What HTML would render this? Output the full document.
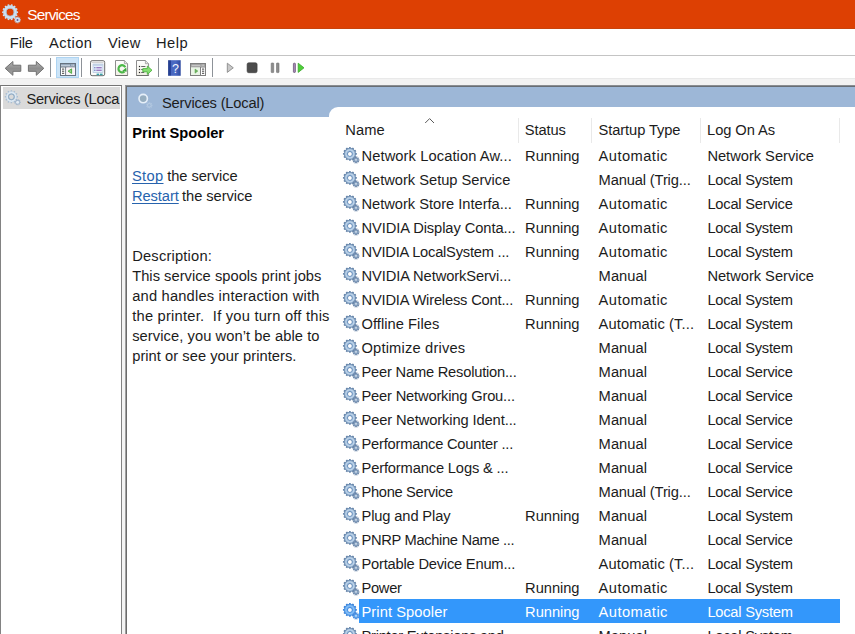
<!DOCTYPE html>
<html><head><meta charset="utf-8"><title>Services</title>
<style>
html,body{margin:0;padding:0;}
body{width:855px;height:634px;overflow:hidden;background:#fff;position:relative;font-family:"Liberation Sans",sans-serif;font-size:14.7px;color:#111;}
div,span,svg{position:absolute;}
.t{line-height:20px;height:20px;white-space:nowrap;color:#1c1c1c;}
.t.w{color:#fff;}
.t.b{font-weight:bold;color:#000;}
.t.lk{color:#2763ad;text-decoration:underline;text-decoration-skip-ink:none;text-underline-offset:1.5px;}
#title{left:0;top:0;width:855px;height:28px;background:#dd4003;border-bottom:1px solid #c8440c;}
#menuline{left:0;top:55px;width:855px;height:1px;background:#c4c4c4;}
#gap{left:0;top:78px;width:855px;height:7px;background:#f2f2f2;border-top:1px solid #e9e9e9;box-sizing:border-box;}
#tree{left:0;top:85px;width:120px;height:560px;border:1px solid #828282;border-top-color:#747474;background:#fff;box-sizing:content-box;}
#treesel{left:2.5px;top:87px;width:117px;height:21.6px;background:#dadada;}
#split{left:122px;top:85px;width:3px;height:560px;background:#f3f3f3;}
#rp{left:125px;top:85px;width:740px;height:560px;border:1px solid #a0a0a0;border-top-color:#8a8d91;background:#fff;}
#rp2{left:126px;top:86px;width:740px;height:560px;border:1px solid #6b6b6b;border-top-color:#676d74;background:#fff;}
#hdr{left:127px;top:87px;width:728px;height:30px;background:#9db7d7;}
#list{left:329px;top:107px;width:540px;height:540px;background:#fff;border-top-left-radius:9px;}
#sel{left:359px;top:599px;width:481px;height:24px;background:#3397fb;}
.cs{top:118px;width:1px;height:25px;background:#e9e9e9;}
.ts{top:58px;width:1px;height:19px;background:#8d9298;}
#tbsel{left:56.2px;top:57px;width:22.5px;height:20.5px;background:#cce4f7;border:1px solid #aed4f2;box-sizing:border-box;}
</style></head><body>
<svg width="0" height="0" style="left:0;top:0;overflow:hidden"><defs>
<radialGradient id="gg" cx="7.9" cy="6.9" r="5.9" gradientUnits="userSpaceOnUse">
<stop offset="0.33" stop-color="#4d75a5"/><stop offset="0.5" stop-color="#96b6d8"/><stop offset="0.68" stop-color="#c6daee"/><stop offset="0.86" stop-color="#8dabca"/><stop offset="1" stop-color="#587ba5"/></radialGradient>
<radialGradient id="ggs" cx="7.9" cy="6.9" r="5.9" gradientUnits="userSpaceOnUse">
<stop offset="0.33" stop-color="#2f78d2"/><stop offset="0.5" stop-color="#62a8f0"/><stop offset="0.68" stop-color="#8cc2f8"/><stop offset="0.86" stop-color="#5aa0ea"/><stop offset="1" stop-color="#3380d8"/></radialGradient>
<g id="gear">
<path d="M13.52 5.94 L14.85 6.08 L14.85 7.72 L13.52 7.86 L13.24 8.88 L14.33 9.67 L13.51 11.09 L12.29 10.54 L11.54 11.29 L12.09 12.51 L10.67 13.33 L9.88 12.24 L8.86 12.52 L8.72 13.85 L7.08 13.85 L6.94 12.52 L5.92 12.24 L5.13 13.33 L3.71 12.51 L4.26 11.29 L3.51 10.54 L2.29 11.09 L1.47 9.67 L2.56 8.88 L2.28 7.86 L0.95 7.72 L0.95 6.08 L2.28 5.94 L2.56 4.92 L1.47 4.13 L2.29 2.71 L3.51 3.26 L4.26 2.51 L3.71 1.29 L5.13 0.47 L5.92 1.56 L6.94 1.28 L7.08 -0.05 L8.72 -0.05 L8.86 1.28 L9.88 1.56 L10.67 0.47 L12.09 1.29 L11.54 2.51 L12.29 3.26 L13.51 2.71 L14.33 4.13 L13.24 4.92Z" fill="#6c89ac"/>
<circle cx="7.9" cy="6.9" r="5.9" fill="url(#gg)"/>
<circle cx="7.9" cy="6.9" r="2.0" fill="#fff"/>
<path d="M16.45 12.41 L17.57 12.40 L17.57 13.40 L16.45 13.39 L16.27 13.94 L17.18 14.59 L16.59 15.40 L15.69 14.74 L15.23 15.08 L15.57 16.14 L14.63 16.44 L14.29 15.38 L13.71 15.38 L13.37 16.44 L12.43 16.14 L12.77 15.08 L12.31 14.74 L11.41 15.40 L10.82 14.59 L11.73 13.94 L11.55 13.39 L10.43 13.40 L10.43 12.40 L11.55 12.41 L11.73 11.86 L10.82 11.21 L11.41 10.40 L12.31 11.06 L12.77 10.72 L12.43 9.66 L13.37 9.36 L13.71 10.42 L14.29 10.42 L14.63 9.36 L15.57 9.66 L15.23 10.72 L15.69 11.06 L16.59 10.40 L17.18 11.21 L16.27 11.86Z" fill="#5f7ca1"/>
<circle cx="14" cy="12.9" r="2.2" fill="#86a1c0"/>
<circle cx="14" cy="12.9" r="0.8" fill="#e6edf5"/>
</g>
<g id="gearsel">
<path d="M13.52 5.94 L14.85 6.08 L14.85 7.72 L13.52 7.86 L13.24 8.88 L14.33 9.67 L13.51 11.09 L12.29 10.54 L11.54 11.29 L12.09 12.51 L10.67 13.33 L9.88 12.24 L8.86 12.52 L8.72 13.85 L7.08 13.85 L6.94 12.52 L5.92 12.24 L5.13 13.33 L3.71 12.51 L4.26 11.29 L3.51 10.54 L2.29 11.09 L1.47 9.67 L2.56 8.88 L2.28 7.86 L0.95 7.72 L0.95 6.08 L2.28 5.94 L2.56 4.92 L1.47 4.13 L2.29 2.71 L3.51 3.26 L4.26 2.51 L3.71 1.29 L5.13 0.47 L5.92 1.56 L6.94 1.28 L7.08 -0.05 L8.72 -0.05 L8.86 1.28 L9.88 1.56 L10.67 0.47 L12.09 1.29 L11.54 2.51 L12.29 3.26 L13.51 2.71 L14.33 4.13 L13.24 4.92Z" fill="#3f86dc"/>
<circle cx="7.9" cy="6.9" r="5.9" fill="url(#ggs)"/>
<circle cx="7.9" cy="6.9" r="2.0" fill="#f2f8ff"/>
<path d="M16.45 12.41 L17.57 12.40 L17.57 13.40 L16.45 13.39 L16.27 13.94 L17.18 14.59 L16.59 15.40 L15.69 14.74 L15.23 15.08 L15.57 16.14 L14.63 16.44 L14.29 15.38 L13.71 15.38 L13.37 16.44 L12.43 16.14 L12.77 15.08 L12.31 14.74 L11.41 15.40 L10.82 14.59 L11.73 13.94 L11.55 13.39 L10.43 13.40 L10.43 12.40 L11.55 12.41 L11.73 11.86 L10.82 11.21 L11.41 10.40 L12.31 11.06 L12.77 10.72 L12.43 9.66 L13.37 9.36 L13.71 10.42 L14.29 10.42 L14.63 9.36 L15.57 9.66 L15.23 10.72 L15.69 11.06 L16.59 10.40 L17.18 11.21 L16.27 11.86Z" fill="#3a7fd6"/>
<circle cx="14" cy="12.9" r="2.2" fill="#5fa5ee"/>
<circle cx="14" cy="12.9" r="0.8" fill="#d8eafc"/>
</g>
</defs></svg>
<div id="title"></div>
<div id="menuline"></div>
<div id="gap"></div>
<div id="tree"></div>
<div id="treesel"></div>
<div id="split"></div>
<div id="rp"></div><div id="rp2"></div>
<div id="hdr"></div>
<div id="list"></div>
<div id="sel"></div>
<div class="cs" style="left:518px"></div>
<div class="cs" style="left:591px"></div>
<div class="cs" style="left:700px"></div>
<div class="cs" style="left:839px"></div>
<div class="ts" style="left:50px"></div>
<div class="ts" style="left:81px"></div>
<div class="ts" style="left:158px"></div>
<div class="ts" style="left:212px"></div>
<div id="tbsel"></div>
<svg id="chev" style="left:422px;top:114px" width="16" height="10" viewBox="422 114 16 10"><path d="M425.2 123 L429.6 118.6 L434 123" fill="none" stroke="#5a5a5a" stroke-width="1"/></svg>
<svg style="left:0;top:0" width="30" height="29" viewBox="0 0 30 29">
<path d="M16.83 11.24 L18.06 11.41 L18.06 12.99 L16.83 13.16 L16.58 14.25 L17.61 14.94 L16.93 16.36 L15.75 15.99 L15.05 16.86 L15.68 17.93 L14.45 18.92 L13.55 18.06 L12.54 18.55 L12.64 19.79 L11.10 20.14 L10.66 18.98 L9.54 18.98 L9.10 20.14 L7.56 19.79 L7.66 18.55 L6.65 18.06 L5.75 18.92 L4.52 17.93 L5.15 16.86 L4.45 15.99 L3.27 16.36 L2.59 14.94 L3.62 14.25 L3.37 13.16 L2.14 12.99 L2.14 11.41 L3.37 11.24 L3.62 10.15 L2.59 9.46 L3.27 8.04 L4.45 8.41 L5.15 7.54 L4.52 6.47 L5.75 5.48 L6.65 6.34 L7.66 5.85 L7.56 4.61 L9.10 4.26 L9.54 5.42 L10.66 5.42 L11.10 4.26 L12.64 4.61 L12.54 5.85 L13.55 6.34 L14.45 5.48 L15.68 6.47 L15.05 7.54 L15.75 8.41 L16.93 8.04 L17.61 9.46 L16.58 10.15ZM6.3999999999999995 12.2 A3.7 3.7 0 1 0 13.8 12.2 A3.7 3.7 0 1 0 6.3999999999999995 12.2Z" fill="#cfe2f1" fill-rule="evenodd"/>
<circle cx="10.1" cy="12.2" r="4.0" fill="none" stroke="#a9bfd4" stroke-width="0.8"/>
<circle cx="10.1" cy="12.2" r="6.6" fill="none" stroke="#b5c9dc" stroke-width="0.6"/>
<path d="M19.94 19.35 L20.96 19.36 L20.96 20.44 L19.94 20.45 L19.72 21.05 L20.49 21.71 L19.81 22.53 L19.02 21.89 L18.46 22.21 L18.63 23.21 L17.57 23.40 L17.38 22.40 L16.75 22.29 L16.23 23.16 L15.31 22.63 L15.81 21.74 L15.40 21.25 L14.43 21.59 L14.07 20.58 L15.02 20.22 L15.02 19.58 L14.07 19.22 L14.43 18.21 L15.40 18.55 L15.81 18.06 L15.31 17.17 L16.23 16.64 L16.75 17.51 L17.38 17.40 L17.57 16.40 L18.63 16.59 L18.46 17.59 L19.02 17.91 L19.81 17.27 L20.49 18.09 L19.72 18.75Z" fill="#b9c9dc"/>
<circle cx="17.5" cy="19.9" r="2.4" fill="#d5e0ee"/>
<circle cx="17.5" cy="19.9" r="1.0" fill="#5a5aa0"/>
</svg>
<svg style="left:0;top:0" width="200" height="120" viewBox="0 0 200 120">
<path d="M16.54 96.02 L17.96 96.11 L17.96 97.49 L16.54 97.58 L16.24 98.70 L17.43 99.48 L16.74 100.68 L15.46 100.05 L14.65 100.86 L15.28 102.14 L14.08 102.83 L13.30 101.64 L12.18 101.94 L12.09 103.36 L10.71 103.36 L10.62 101.94 L9.50 101.64 L8.72 102.83 L7.52 102.14 L8.15 100.86 L7.34 100.05 L6.06 100.68 L5.37 99.48 L6.56 98.70 L6.26 97.58 L4.84 97.49 L4.84 96.11 L6.26 96.02 L6.56 94.90 L5.37 94.12 L6.06 92.92 L7.34 93.55 L8.15 92.74 L7.52 91.46 L8.72 90.77 L9.50 91.96 L10.62 91.66 L10.71 90.24 L12.09 90.24 L12.18 91.66 L13.30 91.96 L14.08 90.77 L15.28 91.46 L14.65 92.74 L15.46 93.55 L16.74 92.92 L17.43 94.12 L16.24 94.90ZM9.0 96.8 A2.4 2.4 0 1 0 13.8 96.8 A2.4 2.4 0 1 0 9.0 96.8Z" fill="#a7bdd3" fill-rule="evenodd"/>
<circle cx="11.4" cy="96.8" r="4.3" fill="none" stroke="#dce8f3" stroke-width="1.8"/>
<circle cx="11.4" cy="96.8" r="2.9" fill="none" stroke="#8fa9c2" stroke-width="0.9"/>
<path d="M19.85 101.74 L20.87 101.74 L20.87 102.66 L19.85 102.66 L19.62 103.30 L20.40 103.95 L19.81 104.65 L19.03 104.00 L18.44 104.34 L18.62 105.34 L17.72 105.50 L17.54 104.50 L16.87 104.38 L16.36 105.26 L15.57 104.80 L16.08 103.92 L15.64 103.40 L14.69 103.75 L14.37 102.89 L15.33 102.54 L15.33 101.86 L14.37 101.51 L14.69 100.65 L15.64 101.00 L16.08 100.48 L15.57 99.60 L16.36 99.14 L16.87 100.02 L17.54 99.90 L17.72 98.90 L18.62 99.06 L18.44 100.06 L19.03 100.40 L19.81 99.75 L20.40 100.45 L19.62 101.10Z" fill="#9fb4cb"/>
<circle cx="17.6" cy="102.2" r="1.5" fill="#e4ecf4"/>
<!-- header icon -->
<circle cx="143.2" cy="98.6" r="3.4" fill="#97aebf"/>
<circle cx="143.2" cy="98.6" r="4.2" fill="none" stroke="#e6eff8" stroke-width="1.6"/>
<path d="M151.55 104.74 L152.57 104.74 L152.57 105.66 L151.55 105.66 L151.32 106.30 L152.10 106.95 L151.51 107.65 L150.73 107.00 L150.14 107.34 L150.32 108.34 L149.42 108.50 L149.24 107.50 L148.57 107.38 L148.06 108.26 L147.27 107.80 L147.78 106.92 L147.34 106.40 L146.39 106.75 L146.07 105.89 L147.03 105.54 L147.03 104.86 L146.07 104.51 L146.39 103.65 L147.34 104.00 L147.78 103.48 L147.27 102.60 L148.06 102.14 L148.57 103.02 L149.24 102.90 L149.42 101.90 L150.32 102.06 L150.14 103.06 L150.73 103.40 L151.51 102.75 L152.10 103.45 L151.32 104.10Z" fill="#b3c8e0"/>
<circle cx="149.3" cy="105.2" r="1.2" fill="#9db8d8"/>
</svg>
<svg style="left:0;top:0" width="855" height="90" viewBox="0 0 855 90">
<defs>
<linearGradient id="ag" x1="0" y1="0" x2="0" y2="1"><stop offset="0" stop-color="#b4b4b4"/><stop offset="0.5" stop-color="#8e8e8e"/><stop offset="1" stop-color="#a2a2a2"/></linearGradient>
<linearGradient id="hg" x1="0" y1="0" x2="1" y2="0"><stop offset="0" stop-color="#223c8c"/><stop offset="0.2" stop-color="#26429a"/><stop offset="0.22" stop-color="#4867c0"/><stop offset="0.6" stop-color="#4a69c2"/><stop offset="1" stop-color="#2b489f"/></linearGradient>
<linearGradient id="dg" x1="0" y1="0" x2="0" y2="1"><stop offset="0" stop-color="#ffffff"/><stop offset="1" stop-color="#f1efe6"/></linearGradient>
</defs>
<!-- back / forward arrows -->
<path d="M5.2 68.3 L12.9 61.5 L12.9 65.2 L20.8 65.2 L20.8 71.3 L12.9 71.3 L12.9 75.3 Z" fill="url(#ag)" stroke="#707070" stroke-width="1" stroke-linejoin="round"/>
<path d="M43.8 68.3 L36.3 61.5 L36.3 65.2 L28.4 65.2 L28.4 71.3 L36.3 71.3 L36.3 75.3 Z" fill="url(#ag)" stroke="#707070" stroke-width="1" stroke-linejoin="round"/>
<!-- show/hide tree -->
<rect x="60.5" y="63.5" width="15" height="12" fill="#fff" stroke="#66727f" stroke-width="1"/>
<rect x="61" y="64" width="14" height="2.6" fill="#8196ad"/>
<rect x="61" y="64.8" width="9" height="0.8" fill="#e8eef5"/>
<rect x="71.5" y="64.6" width="1" height="1" fill="#fff"/><rect x="73.2" y="64.6" width="1" height="1" fill="#fff"/>
<rect x="61" y="66.6" width="14" height="0.9" fill="#66727f"/>
<rect x="65.2" y="67" width="1" height="8.5" fill="#66727f"/>
<rect x="62" y="68.6" width="2.2" height="1" fill="#444"/><rect x="62" y="70.7" width="2.2" height="1" fill="#444"/><rect x="62" y="72.8" width="2.2" height="1" fill="#444"/>
<rect x="66.4" y="67.6" width="8.4" height="7.2" fill="#fbf3f8"/><path d="M71.6 68.9 L71.6 73.4 L68.1 71.15 Z" fill="#9ad48c" stroke="#46a83a" stroke-width="0.9" stroke-linejoin="round"/>
<!-- properties window -->
<rect x="90.5" y="60.7" width="14.2" height="15" rx="1.6" fill="#fbfbfb" stroke="#6b6b6b" stroke-width="1"/>
<rect x="91.5" y="62" width="12" height="0.8" fill="#c9c9c9"/>
<rect x="93" y="64" width="10" height="8.6" fill="#e4eefa" stroke="#a9bcd6" stroke-width="0.6"/>
<rect x="93.3" y="64.3" width="9.4" height="1.4" fill="#b9cbe2"/>
<rect x="94.3" y="67.2" width="1.1" height="1.1" fill="#3f4fa0"/><rect x="96.3" y="67.2" width="5.4" height="1.1" fill="#8a5fb5"/>
<rect x="94.3" y="69.7" width="1.1" height="1.1" fill="#3f4fa0"/><rect x="96.3" y="69.7" width="5.4" height="1.1" fill="#8a5fb5"/>
<rect x="96.6" y="73.6" width="2.6" height="1.6" fill="#3aa0a8"/><rect x="100" y="73.6" width="2.6" height="1.6" fill="#3aa0a8"/>
<!-- refresh doc -->
<path d="M115.5 60.5 L124.4 60.5 L127.6 63.7 L127.6 75.5 L115.5 75.5 Z" fill="url(#dg)" stroke="#8d8d8d" stroke-width="1" stroke-linejoin="round"/>
<path d="M124.4 60.5 L124.4 63.7 L127.6 63.7" fill="#e6e6e6" stroke="#9a9a9a" stroke-width="0.8"/>
<rect x="115.5" y="75" width="12.1" height="1" fill="#6e6e6e"/>
<path d="M124.4 71.6 A3.6 3.6 0 1 1 125.3 67.2" fill="none" stroke="#4cb848" stroke-width="2.2"/>
<path d="M122.2 71.0 L126.6 71.8 L126.3 67.4 Z" fill="#3aa83a"/>
<!-- export list doc -->
<path d="M136.5 60.5 L145.4 60.5 L148.6 63.7 L148.6 75.5 L136.5 75.5 Z" fill="url(#dg)" stroke="#8d8d8d" stroke-width="1" stroke-linejoin="round"/>
<path d="M145.4 60.5 L145.4 63.7 L148.6 63.7" fill="#e6e6e6" stroke="#9a9a9a" stroke-width="0.8"/>
<rect x="136.5" y="75" width="12.1" height="1" fill="#6e6e6e"/>
<rect x="138.9" y="65.9" width="1.2" height="1.2" fill="#222"/><rect x="138.9" y="68.9" width="1.2" height="1.2" fill="#222"/><rect x="138.9" y="71.9" width="1.2" height="1.2" fill="#222"/>
<rect x="141.2" y="66" width="4.2" height="1" fill="#666"/><rect x="141.2" y="69" width="3" height="1" fill="#666"/><rect x="141.2" y="72" width="3" height="1" fill="#666"/>
<path d="M142.8 68.6 L147.3 68.6 L147.3 66 L152 70.2 L147.3 74.4 L147.3 71.8 L142.8 71.8 Z" fill="#86dd72" stroke="#44ad36" stroke-width="0.8" stroke-linejoin="round"/>
<!-- help -->
<rect x="168.1" y="60.2" width="12.6" height="15.6" fill="url(#hg)"/>
<text x="175.5" y="73.2" font-family="Liberation Sans, sans-serif" font-size="12.5" fill="#f4f6ff" text-anchor="middle">?</text>
<!-- window w/ play -->
<rect x="190.5" y="63.5" width="15" height="12" fill="#fff" stroke="#7f7f7f" stroke-width="1"/>
<rect x="191" y="64" width="14" height="2.6" fill="#939393"/>
<rect x="191.5" y="64.8" width="9" height="0.8" fill="#e8e8e8"/>
<rect x="201.6" y="64.6" width="1" height="1" fill="#fff"/><rect x="203.3" y="64.6" width="1" height="1" fill="#fff"/>
<rect x="191" y="66.6" width="14" height="0.9" fill="#7f7f7f"/>
<rect x="191" y="67.5" width="9" height="7.5" fill="#eaf5e6"/>
<rect x="200" y="67" width="1" height="8.5" fill="#7f7f7f"/>
<rect x="202" y="68.6" width="2.2" height="1" fill="#444"/><rect x="202" y="70.7" width="2.2" height="1" fill="#444"/><rect x="202" y="72.8" width="2.2" height="1" fill="#444"/>
<path d="M195 69 L195 73.2 L197.9 71.1 Z" fill="#6db55f" stroke="#5aa34e" stroke-width="0.5"/>
<!-- play / stop / pause / resume -->
<path d="M227.3 63.2 L233.3 67.8 L227.3 72.4 Z" fill="#c9c9c9" stroke="#8a8a8a" stroke-width="0.9" stroke-linejoin="round"/>
<rect x="247.1" y="62.8" width="10" height="9.9" rx="1.6" fill="#4c4c4c" stroke="#3a3a3a" stroke-width="0.6"/>
<rect x="271.2" y="63" width="2.5" height="9.6" rx="0.6" fill="#8c8c8c" stroke="#707070" stroke-width="0.6"/>
<rect x="276.5" y="63" width="2.5" height="9.6" rx="0.6" fill="#8c8c8c" stroke="#707070" stroke-width="0.6"/>
<rect x="293.4" y="63.2" width="2" height="9.2" rx="0.6" fill="#a98bb8" stroke="#5f4a6c" stroke-width="0.7"/>
<path d="M298.2 63.2 L304 67.8 L298.2 72.4 Z" fill="#4fcf3a" stroke="#38a82a" stroke-width="0.8" stroke-linejoin="round"/>
</svg>

<svg class="g" style="left:342px;top:147px" width="20" height="20" viewBox="0 0 20 20"><use href="#gear"/></svg>
<svg class="g" style="left:342px;top:171px" width="20" height="20" viewBox="0 0 20 20"><use href="#gear"/></svg>
<svg class="g" style="left:342px;top:195px" width="20" height="20" viewBox="0 0 20 20"><use href="#gear"/></svg>
<svg class="g" style="left:342px;top:219px" width="20" height="20" viewBox="0 0 20 20"><use href="#gear"/></svg>
<svg class="g" style="left:342px;top:243px" width="20" height="20" viewBox="0 0 20 20"><use href="#gear"/></svg>
<svg class="g" style="left:342px;top:267px" width="20" height="20" viewBox="0 0 20 20"><use href="#gear"/></svg>
<svg class="g" style="left:342px;top:291px" width="20" height="20" viewBox="0 0 20 20"><use href="#gear"/></svg>
<svg class="g" style="left:342px;top:315px" width="20" height="20" viewBox="0 0 20 20"><use href="#gear"/></svg>
<svg class="g" style="left:342px;top:339px" width="20" height="20" viewBox="0 0 20 20"><use href="#gear"/></svg>
<svg class="g" style="left:342px;top:363px" width="20" height="20" viewBox="0 0 20 20"><use href="#gear"/></svg>
<svg class="g" style="left:342px;top:387px" width="20" height="20" viewBox="0 0 20 20"><use href="#gear"/></svg>
<svg class="g" style="left:342px;top:411px" width="20" height="20" viewBox="0 0 20 20"><use href="#gear"/></svg>
<svg class="g" style="left:342px;top:435px" width="20" height="20" viewBox="0 0 20 20"><use href="#gear"/></svg>
<svg class="g" style="left:342px;top:459px" width="20" height="20" viewBox="0 0 20 20"><use href="#gear"/></svg>
<svg class="g" style="left:342px;top:483px" width="20" height="20" viewBox="0 0 20 20"><use href="#gear"/></svg>
<svg class="g" style="left:342px;top:507px" width="20" height="20" viewBox="0 0 20 20"><use href="#gear"/></svg>
<svg class="g" style="left:342px;top:531px" width="20" height="20" viewBox="0 0 20 20"><use href="#gear"/></svg>
<svg class="g" style="left:342px;top:555px" width="20" height="20" viewBox="0 0 20 20"><use href="#gear"/></svg>
<svg class="g" style="left:342px;top:579px" width="20" height="20" viewBox="0 0 20 20"><use href="#gear"/></svg>
<svg class="g" style="left:342px;top:603px" width="20" height="20" viewBox="0 0 20 20"><use href="#gearsel"/></svg>
<svg class="g" style="left:342px;top:627px" width="20" height="20" viewBox="0 0 20 20"><use href="#gear"/></svg>
<span class="t w" style="left:27.2px;top:4.9px;letter-spacing:-0.814px;font-size:15.4px;">Services</span>
<span class="t" style="left:9.8px;top:32.9px;letter-spacing:-0.143px;">File</span>
<span class="t" style="left:49.1px;top:32.9px;letter-spacing:0.395px;">Action</span>
<span class="t" style="left:108.1px;top:32.9px;letter-spacing:0.205px;">View</span>
<span class="t" style="left:156.0px;top:32.9px;letter-spacing:0.495px;">Help</span>
<span class="t" style="left:26.5px;top:88.5px;letter-spacing:-0.324px;">Services (Loca</span>
<span class="t" style="left:162.0px;top:93.0px;letter-spacing:-0.194px;">Services (Local)</span>
<span class="t b" style="left:132.3px;top:123.0px;letter-spacing:-0.040px;">Print Spooler</span>
<span class="t lk" style="left:132.0px;top:166.0px;letter-spacing:0.320px;">Stop</span>
<span class="t" style="left:167.2px;top:166.0px;letter-spacing:-0.057px;">the service</span>
<span class="t lk" style="left:132.0px;top:186.0px;letter-spacing:-0.092px;">Restart</span>
<span class="t" style="left:182.0px;top:186.0px;letter-spacing:-0.057px;">the service</span>
<span class="t" style="left:132.2px;top:246.0px;letter-spacing:0.196px;">Description:</span>
<span class="t" style="left:132.2px;top:266.0px;letter-spacing:0.021px;">This service spools print jobs</span>
<span class="t" style="left:132.2px;top:286.0px;letter-spacing:0.190px;">and handles interaction with</span>
<span class="t" style="left:132.2px;top:306.0px;letter-spacing:0.222px;">the printer.&nbsp; If you turn off this</span>
<span class="t" style="left:132.2px;top:326.0px;letter-spacing:0.071px;">service, you won’t be able to</span>
<span class="t" style="left:132.2px;top:346.0px;letter-spacing:0.038px;">print or see your printers.</span>
<span class="t" style="left:345.2px;top:120.0px;letter-spacing:0.128px;">Name</span>
<span class="t" style="left:524.8px;top:120.0px;letter-spacing:-0.123px;">Status</span>
<span class="t" style="left:598.5px;top:120.0px;letter-spacing:-0.093px;">Startup Type</span>
<span class="t" style="left:707.1px;top:120.0px;letter-spacing:-0.077px;">Log On As</span>
<span class="t" style="left:361.5px;top:145.9px;letter-spacing:0.094px;">Network Location Aw...</span>
<span class="t" style="left:525.1px;top:145.9px;letter-spacing:-0.046px;">Running</span>
<span class="t" style="left:598.6px;top:145.9px;letter-spacing:0.443px;">Automatic</span>
<span class="t" style="left:707.4px;top:145.9px;letter-spacing:-0.028px;">Network Service</span>
<span class="t" style="left:361.5px;top:169.9px;letter-spacing:-0.028px;">Network Setup Service</span>
<span class="t" style="left:598.6px;top:169.9px;letter-spacing:-0.143px;">Manual (Trig...</span>
<span class="t" style="left:707.4px;top:169.9px;letter-spacing:-0.239px;">Local System</span>
<span class="t" style="left:361.5px;top:193.9px;letter-spacing:-0.026px;">Network Store Interfa...</span>
<span class="t" style="left:525.1px;top:193.9px;letter-spacing:-0.046px;">Running</span>
<span class="t" style="left:598.6px;top:193.9px;letter-spacing:0.443px;">Automatic</span>
<span class="t" style="left:707.4px;top:193.9px;letter-spacing:-0.221px;">Local Service</span>
<span class="t" style="left:361.5px;top:217.9px;letter-spacing:-0.084px;">NVIDIA Display Conta...</span>
<span class="t" style="left:525.1px;top:217.9px;letter-spacing:-0.046px;">Running</span>
<span class="t" style="left:598.6px;top:217.9px;letter-spacing:0.443px;">Automatic</span>
<span class="t" style="left:707.4px;top:217.9px;letter-spacing:-0.239px;">Local System</span>
<span class="t" style="left:361.5px;top:241.9px;letter-spacing:-0.229px;">NVIDIA LocalSystem ...</span>
<span class="t" style="left:525.1px;top:241.9px;letter-spacing:-0.046px;">Running</span>
<span class="t" style="left:598.6px;top:241.9px;letter-spacing:0.443px;">Automatic</span>
<span class="t" style="left:707.4px;top:241.9px;letter-spacing:-0.239px;">Local System</span>
<span class="t" style="left:361.5px;top:265.9px;letter-spacing:-0.096px;">NVIDIA NetworkServi...</span>
<span class="t" style="left:598.6px;top:265.9px;letter-spacing:0.055px;">Manual</span>
<span class="t" style="left:707.4px;top:265.9px;letter-spacing:-0.028px;">Network Service</span>
<span class="t" style="left:361.5px;top:289.9px;letter-spacing:-0.187px;">NVIDIA Wireless Cont...</span>
<span class="t" style="left:525.1px;top:289.9px;letter-spacing:-0.046px;">Running</span>
<span class="t" style="left:598.6px;top:289.9px;letter-spacing:0.443px;">Automatic</span>
<span class="t" style="left:707.4px;top:289.9px;letter-spacing:-0.239px;">Local System</span>
<span class="t" style="left:361.5px;top:313.9px;letter-spacing:0.040px;">Offline Files</span>
<span class="t" style="left:525.1px;top:313.9px;letter-spacing:-0.046px;">Running</span>
<span class="t" style="left:598.6px;top:313.9px;letter-spacing:0.108px;">Automatic (T...</span>
<span class="t" style="left:707.4px;top:313.9px;letter-spacing:-0.239px;">Local System</span>
<span class="t" style="left:361.5px;top:337.9px;letter-spacing:0.172px;">Optimize drives</span>
<span class="t" style="left:598.6px;top:337.9px;letter-spacing:0.055px;">Manual</span>
<span class="t" style="left:707.4px;top:337.9px;letter-spacing:-0.239px;">Local System</span>
<span class="t" style="left:361.5px;top:361.9px;letter-spacing:-0.214px;">Peer Name Resolution...</span>
<span class="t" style="left:598.6px;top:361.9px;letter-spacing:0.055px;">Manual</span>
<span class="t" style="left:707.4px;top:361.9px;letter-spacing:-0.221px;">Local Service</span>
<span class="t" style="left:361.5px;top:385.9px;letter-spacing:-0.185px;">Peer Networking Grou...</span>
<span class="t" style="left:598.6px;top:385.9px;letter-spacing:0.055px;">Manual</span>
<span class="t" style="left:707.4px;top:385.9px;letter-spacing:-0.221px;">Local Service</span>
<span class="t" style="left:361.5px;top:409.9px;letter-spacing:-0.103px;">Peer Networking Ident...</span>
<span class="t" style="left:598.6px;top:409.9px;letter-spacing:0.055px;">Manual</span>
<span class="t" style="left:707.4px;top:409.9px;letter-spacing:-0.221px;">Local Service</span>
<span class="t" style="left:361.5px;top:433.9px;letter-spacing:-0.224px;">Performance Counter ...</span>
<span class="t" style="left:598.6px;top:433.9px;letter-spacing:0.055px;">Manual</span>
<span class="t" style="left:707.4px;top:433.9px;letter-spacing:-0.221px;">Local Service</span>
<span class="t" style="left:361.5px;top:457.9px;letter-spacing:-0.151px;">Performance Logs &amp; ...</span>
<span class="t" style="left:598.6px;top:457.9px;letter-spacing:0.055px;">Manual</span>
<span class="t" style="left:707.4px;top:457.9px;letter-spacing:-0.221px;">Local Service</span>
<span class="t" style="left:361.5px;top:481.9px;letter-spacing:-0.325px;">Phone Service</span>
<span class="t" style="left:598.6px;top:481.9px;letter-spacing:-0.143px;">Manual (Trig...</span>
<span class="t" style="left:707.4px;top:481.9px;letter-spacing:-0.221px;">Local Service</span>
<span class="t" style="left:361.5px;top:505.9px;letter-spacing:-0.134px;">Plug and Play</span>
<span class="t" style="left:525.1px;top:505.9px;letter-spacing:-0.046px;">Running</span>
<span class="t" style="left:598.6px;top:505.9px;letter-spacing:0.055px;">Manual</span>
<span class="t" style="left:707.4px;top:505.9px;letter-spacing:-0.239px;">Local System</span>
<span class="t" style="left:361.5px;top:529.9px;letter-spacing:-0.330px;">PNRP Machine Name ...</span>
<span class="t" style="left:598.6px;top:529.9px;letter-spacing:0.055px;">Manual</span>
<span class="t" style="left:707.4px;top:529.9px;letter-spacing:-0.221px;">Local Service</span>
<span class="t" style="left:361.5px;top:553.9px;letter-spacing:-0.212px;">Portable Device Enum...</span>
<span class="t" style="left:598.6px;top:553.9px;letter-spacing:0.108px;">Automatic (T...</span>
<span class="t" style="left:707.4px;top:553.9px;letter-spacing:-0.239px;">Local System</span>
<span class="t" style="left:361.5px;top:577.9px;letter-spacing:-0.308px;">Power</span>
<span class="t" style="left:525.1px;top:577.9px;letter-spacing:-0.046px;">Running</span>
<span class="t" style="left:598.6px;top:577.9px;letter-spacing:0.443px;">Automatic</span>
<span class="t" style="left:707.4px;top:577.9px;letter-spacing:-0.239px;">Local System</span>
<span class="t w" style="left:361.5px;top:601.9px;letter-spacing:0.076px;">Print Spooler</span>
<span class="t w" style="left:525.1px;top:601.9px;letter-spacing:-0.046px;">Running</span>
<span class="t w" style="left:598.6px;top:601.9px;letter-spacing:0.443px;">Automatic</span>
<span class="t w" style="left:707.4px;top:601.9px;letter-spacing:-0.239px;">Local System</span>
<span class="t" style="left:361.5px;top:625.9px;letter-spacing:-0.253px;">Printer Extensions and...</span>
<span class="t" style="left:598.6px;top:625.9px;letter-spacing:0.055px;">Manual</span>
<span class="t" style="left:707.4px;top:625.9px;letter-spacing:-0.239px;">Local System</span>
</body></html>
